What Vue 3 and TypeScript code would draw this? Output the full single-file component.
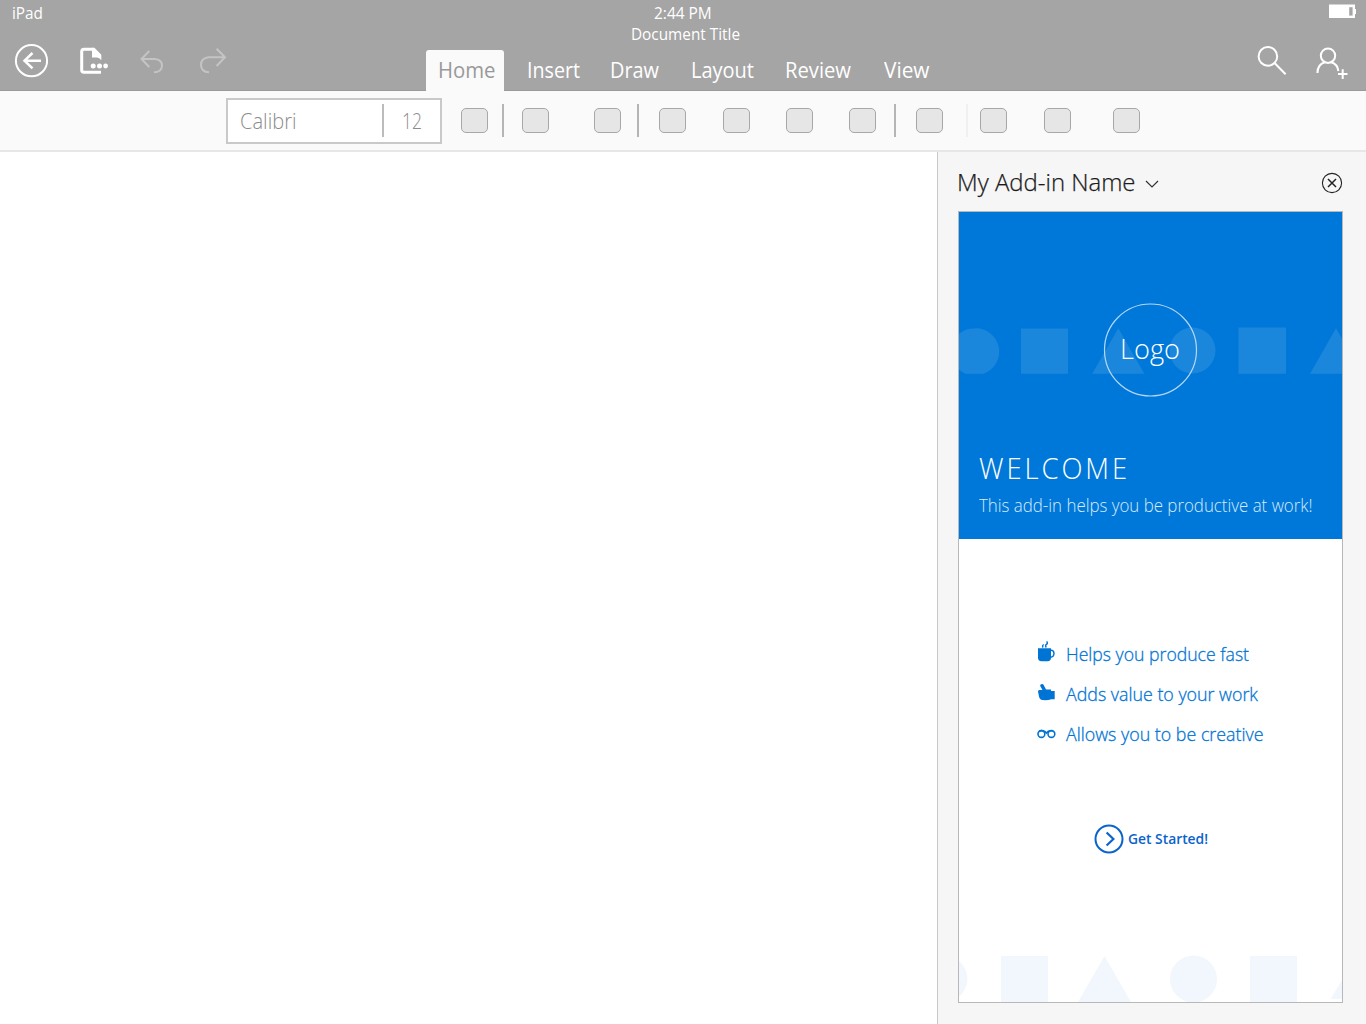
<script setup lang="ts">
interface Tab { label: string; width: number; gap: number }
interface Tool { kind: 'button' | 'rule' | 'faint'; gap: number }

const tabs: Tab[] = [
  { label: 'Insert', width: 53, gap: 22.5 },
  { label: 'Draw', width: 49, gap: 30.5 },
  { label: 'Layout', width: 63, gap: 32 },
  { label: 'Review', width: 66, gap: 31 },
  { label: 'View', width: 45.5, gap: 33 },
]

const tools: Tool[] = [
  { kind: 'button', gap: 19 },
  { kind: 'rule', gap: 14 },
  { kind: 'button', gap: 19 },
  { kind: 'button', gap: 45 },
  { kind: 'rule', gap: 16 },
  { kind: 'button', gap: 21 },
  { kind: 'button', gap: 36.5 },
  { kind: 'button', gap: 36.5 },
  { kind: 'button', gap: 36 },
  { kind: 'rule', gap: 18 },
  { kind: 'button', gap: 21 },
  { kind: 'faint', gap: 23 },
  { kind: 'button', gap: 13 },
  { kind: 'button', gap: 37 },
  { kind: 'button', gap: 42 },
]

// Condenses a label horizontally so that it takes exactly the given width.
const vFit = {
  mounted(el: HTMLElement, binding: { value: number }) {
    const natural = el.getBoundingClientRect().width
    el.style.transform = `scaleX(${binding.value / natural})`
    el.style.marginRight = `${binding.value - natural}px`
  },
}
</script>

<template>
  <div class="screen">
    <header class="top">
      <div class="status">
        <span v-fit="31" class="fit device">iPad</span>
        <span v-fit="57.5" class="fit clock">2:44 PM</span>
        <div class="battery-slot">
          <svg class="battery" width="28" height="15" viewBox="0 0 28 15">
            <path d="M0 0.5H26V5H27V10H26V14H0Z" fill="#fff" />
            <path d="M20.2 3.2H23.6V11.6H20.2Z" fill="#a5a5a5" />
          </svg>
        </div>
      </div>
      <div class="doc"><span v-fit="109" class="fit">Document Title</span></div>
      <div class="ribbon">
        <div class="left-icons">
          <svg width="240" height="50" viewBox="0 40 240 50" fill="none" stroke="#fff">
            <circle cx="31.5" cy="60.7" r="15.6" stroke-width="2" />
            <path d="M41 60.7H24.5M32.5 53L24.5 60.7L32.5 68.4" stroke-width="2.5" />
            <path d="M101 72.3H84Q81.7 72.3 81.7 70V51.5Q81.7 49.2 84 49.2H93" stroke-width="3" />
            <path d="M92 47.7H94.5L101.3 54.8V60.3Q99.5 57.6 97 57.6H92Z" fill="#fff" stroke="none" />
            <g fill="#fff" stroke="none"><circle cx="93.2" cy="66" r="2.5" /><circle cx="99.5" cy="66" r="2.5" /><circle cx="105.6" cy="66" r="2.4" /></g>
            <g stroke="#c4c4c4" stroke-width="2">
              <path d="M149.3 51L141.5 59L149.3 67M141.8 59H154.7Q162 59.5 162 65.8Q161.7 72.3 154 72.3" />
              <path d="M216.6 48.7L225 57.3L216.6 66M224.7 57.3H208.6Q201 58.2 201 65Q201.2 72 209 72.3" />
            </g>
          </svg>
        </div>
        <nav class="tabs">
          <a class="tab active"><span v-fit="57.5" class="fit">Home</span></a>
          <a v-for="t in tabs" :key="t.label" class="tab" :style="{ marginLeft: t.gap + 'px' }"><span v-fit="t.width" class="fit">{{ t.label }}</span></a>
        </nav>
        <svg class="right-icons" width="100" height="50" viewBox="1250 40 100 50" fill="none" stroke="#fff" stroke-width="2">
          <circle cx="1267.9" cy="56.4" r="9.3" />
          <path d="M1274.3 62.8L1285.6 74.2" />
          <circle cx="1328" cy="55.7" r="7.2" />
          <path d="M1317.4 73Q1317.7 64 1325 62.3M1331 62.3Q1337.5 64 1338.4 71" />
          <path d="M1338 74H1347.5M1342.7 69.2V79" />
        </svg>
      </div>
    </header>

    <div class="toolbar">
      <div class="font-field">
        <div class="font-name"><span v-fit="56.5" class="fit">Calibri</span></div>
        <div class="font-size"><span v-fit="20" class="fit">12</span></div>
      </div>
      <i v-for="(t, n) in tools" :key="n" :class="t.kind" :style="{ marginLeft: t.gap + 'px' }" />
    </div>

    <div class="body">
      <main class="page" />
      <aside class="pane">
        <div class="pane-head">
          <span v-fit="178.5" class="fit pane-title">My Add-in Name</span>
          <svg class="chevron" width="14" height="8" viewBox="0 0 14 8"><path d="M1 1L7 7L13 1" fill="none" stroke="#333" stroke-width="1.2" /></svg>
          <svg class="close" width="22" height="22" viewBox="0 0 22 22" fill="none" stroke="#222"><circle cx="11" cy="11" r="9.6" stroke-width="1.1" /><path d="M7 7L15 15M15 7L7 15" stroke-width="1.5" /></svg>
        </div>
        <div class="card">
          <section class="hero">
            <svg class="art" width="383" height="327" viewBox="959 212 383 327">
              <g fill="#1a86dc">
                <path d="M959 333.7A23.3 23.3 0 0 1 974.5 328.4A23.3 23.3 0 0 1 983.5 373.7H965.5Q962 372.3 959 369.7Z" />
                <path d="M1021 328.5H1068V373.7H1021ZM1238.5 327.5H1286V373.7H1238.5Z" />
                <path d="M1118.3 328.3L1144.4 373.7H1092.2ZM1336 328.3L1362 373.7H1310Z" />
                <circle cx="1192.5" cy="350.5" r="23" />
              </g>
              <circle cx="1150.5" cy="350" r="46" fill="none" stroke="#b5d7f5" stroke-width="1.2" />
            </svg>
            <div class="logo"><span v-fit="60" class="fit">Logo</span></div>
            <h1><span v-fit="151" class="fit">WELCOME</span></h1>
            <p><span v-fit="333.5" class="fit">This add-in helps you be productive at work!</span></p>
          </section>
          <ul class="benefits">
            <li>
              <svg width="20" height="24" viewBox="1036 640 20 24">
                <path d="M1038 648.3H1051V657.5Q1051 661.3 1047.5 661.3H1041.5Q1038 661.3 1038 657.5Z" fill="#0074d4" />
                <path d="M1050.5 650.2H1051.5Q1054 650.5 1054 653.7Q1053.7 657 1050.5 657.2M1043.2 647.5Q1041.7 646 1043.7 644.5M1046.3 647.5Q1044.8 645.4 1046.7 644.2Q1048 643.3 1046.7 641.3" fill="none" stroke="#0074d4" stroke-width="1.4" />
              </svg>
              <span v-fit="183" class="fit">Helps you produce fast</span>
            </li>
            <li>
              <svg width="20" height="24" viewBox="1036 680 20 24">
                <path d="M1041 684.3Q1042.8 683.2 1043.8 685.3L1046 689.5H1051V691H1054.7V699.2H1051.5Q1046 700.8 1041 699.7Q1039 698.5 1038.8 695.5L1038 691.2Q1038.2 690 1040 690H1042.5L1040.2 686Q1040 685 1041 684.3Z" fill="#0074d4" />
              </svg>
              <span v-fit="192" class="fit">Adds value to your work</span>
            </li>
            <li>
              <svg width="20" height="24" viewBox="1036 720 20 24" fill="none" stroke="#0074d4" stroke-width="1.6">
                <circle cx="1041.4" cy="734" r="3.4" /><circle cx="1051.4" cy="734" r="3.4" /><path d="M1039 731.2Q1041 730.4 1043 730.8Q1045 731.2 1046.4 733Q1048.2 730.8 1050.5 730.8H1053" />
              </svg>
              <span v-fit="197.5" class="fit">Allows you to be creative</span>
            </li>
          </ul>
          <a class="start">
            <svg width="30" height="30" viewBox="0 0 30 30" fill="none" stroke="#0b63cd" stroke-width="2"><circle cx="15" cy="15" r="13.5" /><path d="M12.6 8.5L19.4 15L12.6 21.5" stroke-width="2.2" /></svg>
            <span v-fit="80" class="fit">Get Started!</span>
          </a>
          <svg class="foot" width="383" height="47" viewBox="959 955 383 47" fill="#f1f7fd">
            <path d="M959 961Q967.5 968.5 967.5 979Q967.5 989 959 997ZM1001 956H1048V1003H1001ZM1250 956H1297V1003H1250Z" />
            <path d="M1104.5 956L1131.5 1003H1077.5ZM1342 980V999H1330.5Z" />
            <circle cx="1193.5" cy="979" r="23.5" />
          </svg>
        </div>
      </aside>
    </div>
  </div>
</template>

<style>
body { margin: 0; }
</style>

<style scoped>
.screen { width: 1366px; height: 1024px; display: flex; flex-direction: column; background: #fff; font-family: "Open Sans", "Noto Sans", sans-serif; overflow: hidden; box-sizing: border-box; }
.fit { display: inline-block; white-space: nowrap; transform-origin: 0 50%; }
.top { border-bottom: 1px solid #999; box-sizing: border-box; height: 91px; background: #a5a5a5; color: #fff; flex: none; }
.status { display: grid; grid-template-columns: 1fr 58px 1fr; height: 26px; line-height: 27px; font-size: 15.5px; }
.device { margin-left: 11.5px; justify-self: start; }
.clock { margin-left: 0.3px; }
.battery-slot { display: flex; justify-content: flex-end; padding: 4px 9px 0 0; }
.battery { display: block; }
.doc { height: 14px; line-height: 17px; text-align: center; font-size: 15.5px; padding-left: 5px; }
.ribbon { display: flex; height: 50px; }
.left-icons { width: 426px; }
.left-icons svg { display: block; }
.tabs { display: flex; flex: 1; align-items: flex-end; }
.tab { height: 40px; line-height: 39px; font-size: 21.5px; flex: none; }
.active { width: 66px; height: 41px; line-height: 39px; padding-left: 12px; margin-bottom: -1px; background: #fafafa; color: #999; border-radius: 3px 3px 0 0; }
.right-icons { margin-right: 16px; }
.toolbar { height: 61px; flex: none; box-sizing: border-box; border-bottom: 2px solid #e7e7e7; background: #fafafa; display: flex; padding-left: 226px; align-items: center; }
.font-field { width: 216px; height: 46px; box-sizing: border-box; border: 2px solid #c9c9c9; background: #fff; display: flex; align-items: center; font-size: 22px; font-weight: 300; color: #8c8c8c; }
.font-name { width: 156px; height: 33px; line-height: 32px; padding-left: 12px; border-right: 2px solid #bcbcbc; box-sizing: border-box; }
.font-size { height: 33px; line-height: 32px; padding-left: 17.5px; }
.button { width: 27px; height: 25px; box-sizing: border-box; border: 1px solid #a8a8a8; border-radius: 5px; background: #e6e6e6; flex: none; }
.rule, .faint { width: 1.5px; height: 33px; margin-right: -0.5px; background: #b5b5b5; flex: none; }
.faint { background: #f0f0f0; }
.body { flex: 1; display: flex; }
.page { width: 937px; background: #fff; }
.pane { flex: 1; border-left: 1px solid #c8c8c8; background: #f6f6f6; padding: 0 23px 0 20px; }
.pane-head { height: 59px; display: flex; align-items: center; color: #1c1c1c; font-size: 24px; font-weight: 300; }
.pane-title { margin-left: -1px; height: 59px; line-height: 60px; -webkit-text-stroke: 0.25px currentColor; }
.chevron { margin: 5px 0 0 9px; }
.close { margin-left: auto; margin-top: 3px; }
.card { height: 792px; width: 385px; box-sizing: border-box; border: 1px solid #b8b8b8; background: #fff; display: flex; flex-direction: column; }
.hero { height: 327px; background: #0078d9; color: #fff; position: relative; font-weight: 300; flex: none; }
.art { display: block; position: absolute; top: 0; left: 0; }
.logo { position: relative; padding: 91px 0 0 160.7px; height: 138px; line-height: 91px; font-size: 28px; }
h1 { position: relative; margin: 0 0 0 20px; font-size: 28.5px; font-weight: 300; letter-spacing: 3px; height: 46px; line-height: 54px; }
p { position: relative; margin: 0 0 0 20px; font-size: 18.7px; line-height: 35px; color: #d9ebfa; }
.benefits { list-style: none; margin: 95px 0 0 77px; padding: 0; color: #0074d4; font-size: 19px; }
.benefits li { height: 40px; display: flex; align-items: center; }
.benefits svg { margin-top: -4px; }
.benefits .fit { margin: 0 0 0 10.3px; font-weight: 300; -webkit-text-stroke: 0.3px currentColor; }
.start { display: flex; align-items: center; margin: 69px 0 0 135px; height: 31px; color: #0b63cd; font-size: 14.3px; font-weight: 600; }
.start .fit { margin: -1px 0 0 4px; }
.foot { display: block; margin-top: auto; }
</style>
